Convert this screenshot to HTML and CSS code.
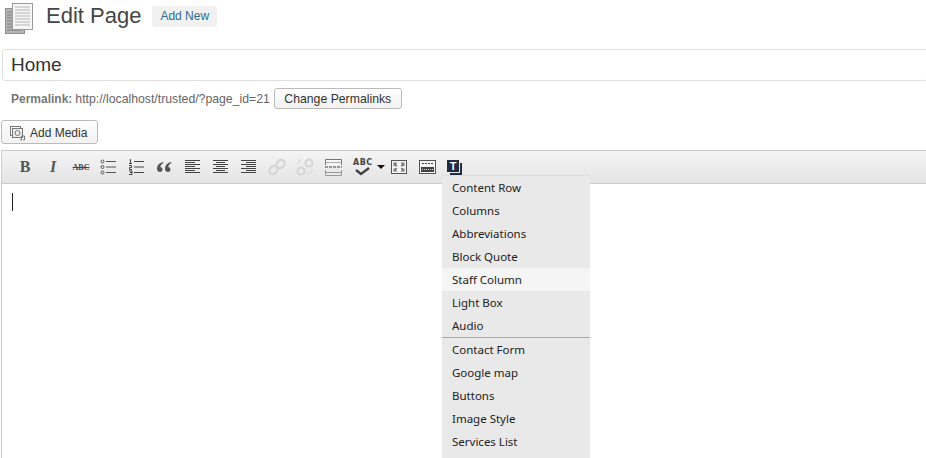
FILE: index.html
```html
<!DOCTYPE html>
<html>
<head>
<meta charset="UTF-8">
<title>Edit Page</title>
<link rel="stylesheet" href="styles.css">
</head>
<body>

<div class="heading">
  <svg class="page-icon" width="30" height="32" viewBox="0 0 30 32">
    <rect x="0.5" y="6.5" width="19" height="25" fill="#b5b5b5" stroke="#8f8f8f"/>
    <path d="M2 10h7M2 13h7M2 16h7M2 19h7M2 22h7M2 25h7M2 28h14" stroke="#808080"/>
    <rect x="7.5" y="1.5" width="20" height="26" fill="#f6f6f6" stroke="#9a9a9a"/>
    <path d="M10 5h15M10 8h15M10 11h15M10 14h15M10 17h15M10 20h15M10 23h15" stroke="#b4b4b4"/>
  </svg>
  <h2>Edit Page</h2>
  <a class="add-new">Add New</a>
</div>

<div class="title-box">Home</div>

<div class="permalink">
  <b>Permalink:</b> <span class="url">http://localhost/trusted/?page_id=21</span>
  <button class="btn">Change Permalinks</button>
</div>

<button class="btn media-btn">
  <svg width="17" height="16" viewBox="0 0 17 16" fill="none" stroke="#777">
    <rect x="1.5" y="1.5" width="10" height="9"/>
    <rect x="3.5" y="3.5" width="10" height="9" fill="#eee"/>
    <circle cx="8.5" cy="8" r="2.5"/>
    <path d="M12.5 15v-4h3v4M11 15h1.5M14 15h1.5"/>
  </svg>
  Add Media
</button>

<div class="editor">
  <div class="toolbar">
    <span class="tool tool-b">B</span>
    <span class="tool tool-i">I</span>
    <span class="tool tool-abc">ABC</span>
    <span class="tool">
      <svg width="18" height="16" viewBox="0 0 18 16" fill="none" stroke="#555">
        <circle cx="2.5" cy="2.5" r="1.5"/><circle cx="2.5" cy="8" r="1.5"/><circle cx="2.5" cy="13.5" r="1.5"/>
        <path d="M6 2.5h10M6 8h10M6 13.5h10"/>
      </svg>
    </span>
    <span class="tool">
      <svg width="18" height="16" viewBox="0 0 18 16" fill="none" stroke="#444">
        <path d="M1.5 1l1-.5v4M1 4.5h3M1 6.5h2.5v2h-2v2H4M1 12h3v1.5H2M2 13.5h2v2H1"/>
        <path d="M6 2.5h10M6 8h10M6 13.5h10"/>
      </svg>
    </span>
    <span class="tool">
      <svg width="16" height="10" viewBox="0 0 16 10" fill="#555">
        <path d="M6 0C2 1 0 3.5 0 6.5 0 8.5 1.2 10 3 10c1.5 0 2.5-1 2.5-2.5S4.4 5 3.2 5C3.5 3.5 4.5 2 6.5 1zM14 0c-4 1-6 3.5-6 6.5 0 2 1.2 3.5 3 3.5 1.5 0 2.5-1 2.5-2.5S12.4 5 11.2 5c.3-1.5 1.3-3 3.3-4z"/>
      </svg>
    </span>
    <span class="tool">
      <svg width="16" height="14" viewBox="0 0 16 14" stroke="#444">
        <path d="M0 .5h15M0 2.5h10M0 4.5h15M0 6.5h10M0 8.5h15M0 10.5h10M0 12.5h15"/>
      </svg>
    </span>
    <span class="tool">
      <svg width="16" height="14" viewBox="0 0 16 14" stroke="#444">
        <path d="M0 .5h15M3 2.5h9M0 4.5h15M3 6.5h9M0 8.5h15M3 10.5h9M0 12.5h15"/>
      </svg>
    </span>
    <span class="tool">
      <svg width="16" height="14" viewBox="0 0 16 14" stroke="#444">
        <path d="M0 .5h15M5 2.5h10M0 4.5h15M5 6.5h10M0 8.5h15M5 10.5h10M0 12.5h15"/>
      </svg>
    </span>
    <span class="tool">
      <svg width="18" height="18" viewBox="0 0 18 18" fill="none" stroke="#d4d4d4" stroke-width="2">
        <rect x="9" y="1.5" width="7" height="9" rx="3.5" transform="rotate(45 12.5 6)"/>
        <rect x="2" y="7.5" width="7" height="9" rx="3.5" transform="rotate(45 5.5 12)"/>
      </svg>
    </span>
    <span class="tool">
      <svg width="18" height="18" viewBox="0 0 18 18" fill="none" stroke="#d4d4d4" stroke-width="2">
        <circle cx="13" cy="5" r="3.5"/><circle cx="5" cy="13" r="3.5"/>
        <path d="M2 2l3 3M4 1v2M1 5h2M13 13l3 3M15 12h2M12 15v2" stroke-width="1"/>
      </svg>
    </span>
    <span class="tool">
      <svg width="17" height="17" viewBox="0 0 17 17" fill="none" stroke="#777">
        <path d="M.5 6V.5h16V6" fill="#f6f6f6"/>
        <path d="M.5 3.5h16" stroke="#aaa"/>
        <path d="M0 8h17" stroke="#444" stroke-dasharray="3 1"/>
        <path d="M.5 11v5.5h16V11M.5 13.5h16" stroke="#999"/>
      </svg>
    </span>
    <span class="tool tool-spell">
      <span class="spell-mark">
        <span class="spell-abc">ABC</span>
        <svg width="15" height="9" viewBox="0 0 15 9" fill="none" stroke="#444" stroke-width="2.5"><path d="M1 3l5 4 8-6"/></svg>
      </span>
      <span class="arrow"></span>
    </span>
    <span class="tool">
      <svg width="16" height="14" viewBox="0 0 16 14">
        <rect x=".5" y=".5" width="15" height="13" fill="#f4f4f4" stroke="#555"/>
        <path d="M2.500 2.500h4l-1.500 1.500 1 1v1.500h-1.500l-1-1-1 1zM13.500 2.500h-4l1.500 1.500-1 1v1.500h1.500l1-1 1 1zM2.500 11.500h4l-1.500-1.500 1-1v-1h-1.500l-1 1-1-1zM13.500 11.500h-4l1.500-1.500-1-1v-1h1.500l1 1 1-1z" fill="#777"/>
      </svg>
    </span>
    <span class="tool">
      <svg width="17" height="14" viewBox="0 0 17 14">
        <rect x=".5" y=".5" width="16" height="13" fill="#f4f4f4" stroke="#555"/>
        <path d="M3 3.5h11" stroke="#444" stroke-dasharray="2 1"/>
        <rect x="2" y="7" width="13" height="5" fill="#444"/>
        <path d="M3 9.5h11" stroke="#ddd" stroke-dasharray="1 1"/>
      </svg>
    </span>
    <span class="tool tool-t">
      <svg width="17" height="17" viewBox="0 0 17 17">
        <path d="M15 4v11H4" fill="none" stroke="#1f2c44" stroke-width="2"/>
        <rect x="1" y="1" width="12" height="12" fill="#1f2c44"/>
        <text x="7" y="11" class="t-glyph">T</text>
      </svg>
    </span>
  </div>
  <div class="edit-area"><span class="caret"></span></div>

  <ul class="menu">
    <li>Content Row</li>
    <li>Columns</li>
    <li>Abbreviations</li>
    <li>Block Quote</li>
    <li class="active">Staff Column</li>
    <li>Light Box</li>
    <li class="last">Audio</li>
    <li>Contact Form</li>
    <li>Google map</li>
    <li>Buttons</li>
    <li>Image Style</li>
    <li>Services List</li>
  </ul>
</div>

</body>
</html>
```

FILE: styles.css
```css
html, body {
  height: 458px;
  overflow: hidden;
}
body {
  font-family: "Liberation Sans", Arial, sans-serif;
  margin: 0;
  background-color: #fff;
  color: #333;
}
.heading {
  display: flex;
  align-items: flex-start;
  height: 49px;
  padding: 2px 0 0 5px;
  box-sizing: border-box;
}
.page-icon {
  flex: none;
}
h2 {
  font-size: 22px;
  font-weight: normal;
  line-height: 28px;
  margin: 0 0 0 11px;
  color: #464646;
}
.add-new {
  margin: 4px 0 0 11px;
  padding: 0 8px;
  height: 21px;
  line-height: 21px;
  font-size: 12px;
  color: #2f6a8c;
  background-color: #f1f1f1;
  border-radius: 3px;
}
.title-box {
  margin-left: 2px;
  width: 100%;
  height: 32px;
  box-sizing: border-box;
  border: 1px solid #dfdfdf;
  border-radius: 3px;
  padding-left: 8px;
  font-size: 19px;
  line-height: 30px;
  color: #333;
}
.permalink {
  display: flex;
  align-items: center;
  height: 21px;
  margin-top: 7px;
  padding-left: 11px;
  font-size: 12.25px;
  color: #666;
  white-space: pre;
}
.permalink b {
  font-size: 12px;
  color: #777;
}
.url {
  margin-left: 3px;
}
.permalink .btn {
  margin-left: 4px;
}
.btn {
  font-family: "Liberation Sans", Arial, sans-serif;
  font-size: 12.25px;
  color: #333;
  background: linear-gradient(#fefefe, #f2f2f2);
  border: 1px solid #bbb;
  border-radius: 3px;
  height: 21px;
  padding: 0 9.5px;
}
.media-btn {
  display: flex;
  align-items: center;
  gap: 4px;
  height: 24px;
  width: 97px;
  margin: 11px 0 0 1px;
  padding: 1px 0 0 7px;
  font-size: 12px;
  white-space: nowrap;
}
.editor {
  position: relative;
  margin: 6px 0 0 1px;
}
.toolbar {
  display: flex;
  align-items: center;
  height: 34px;
  box-sizing: border-box;
  padding-left: 9px;
  border: 1px solid #ccc;
  border-right: none;
  background: linear-gradient(#f4f4f4, #e4e4e4);
}
.tool {
  flex: none;
  width: 28px;
  display: flex;
  justify-content: center;
  align-items: center;
  color: #555;
}
.tool-b {
  font: bold 16px "Liberation Serif", serif;
}
.tool-i {
  font: italic bold 16px "Liberation Serif", serif;
}
.tool-abc {
  font: bold 8px "Liberation Serif", serif;
  text-decoration: line-through;
  color: #444;
}
.tool-spell {
  width: 38px;
  gap: 4px;
  justify-content: flex-start;
  padding-left: 6px;
  box-sizing: border-box;
}
.tool-t {
  margin-left: -1px;
}
.spell-mark {
  display: flex;
  flex-direction: column;
  align-items: center;
  margin-top: 1px;
}
.spell-abc {
  font: bold 8px/8px "DejaVu Sans", sans-serif;
  letter-spacing: .5px;
  color: #444;
}
.arrow {
  border: 4px solid transparent;
  border-top: 4px solid #111;
  border-bottom: none;
}
.t-glyph {
  font: bold 11px "Liberation Sans", sans-serif;
  fill: #fff;
  text-anchor: middle;
}
.edit-area {
  height: 274px;
  box-sizing: border-box;
  padding: 9px 0 0 10px;
  border-left: 1px solid #ccc;
}
.caret {
  display: block;
  width: 1px;
  height: 18px;
  background-color: #222;
}
.menu {
  position: absolute;
  left: 441px;
  top: 25px;
  width: 148px;
  height: 283px;
  overflow: hidden;
  margin: 0;
  padding: 0;
  list-style: none;
  background-color: #e9e9e9;
  border-top: 1px solid #ddd;
  font-family: "Noto Sans", "DejaVu Sans", sans-serif;
  font-size: 11.5px;
  color: #222;
}
.menu li {
  height: 23px;
  line-height: 24px;
  padding-left: 10px;
}
.menu li.active {
  background-color: #f5f5f5;
}
.menu li.last {
  height: 24px;
  border-bottom: 1px solid #aaa;
  box-sizing: border-box;
}
```
